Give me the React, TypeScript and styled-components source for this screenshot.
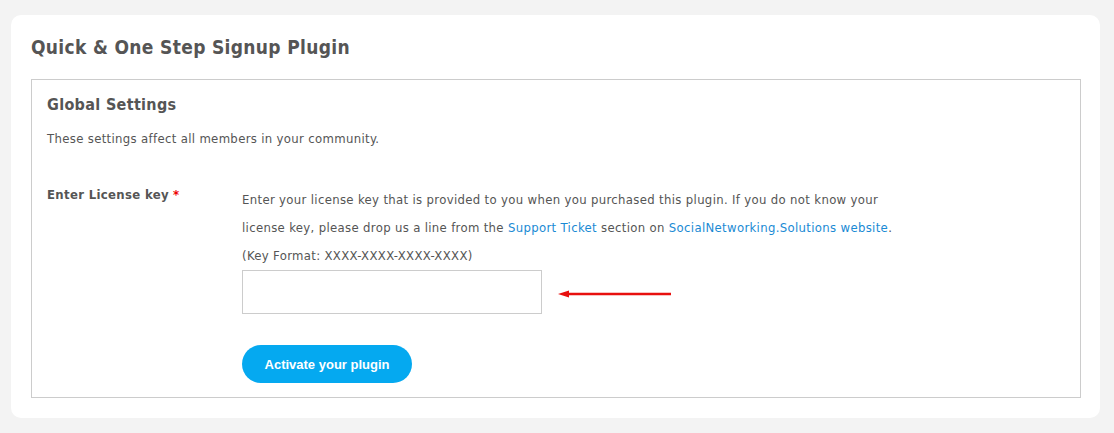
import React from 'react';
import styled, { createGlobalStyle } from 'styled-components';

const GlobalStyle = createGlobalStyle`
  body {
    margin: 0;
    background: #f3f3f3;
    font-family: Tahoma, "DejaVu Sans Condensed", "Noto Sans", sans-serif;
    letter-spacing: 0.33px;
    color: #555;
  }
`;

const Page = styled.div`
  padding: 15px 14px 14px 11px;
`;

const Card = styled.div`
  background: #fff;
  border-radius: 10px;
  padding: 20px 19px 20px 20px;
`;

const Title = styled.h2`
  margin: 0 0 20px;
  font-size: 19px;
  line-height: 24px;
  font-weight: bold;
  color: #555;
`;

const SettingsBox = styled.div`
  border: 1px solid #ccc;
  padding: 15px 15px 14px 15px;
`;

const BoxTitle = styled.h3`
  margin: 0 0 14px;
  font-size: 16px;
  line-height: 20px;
  font-weight: bold;
  color: #555;
`;

const Hint = styled.p`
  margin: 0 0 36px;
  font-size: 13px;
  line-height: 20px;
`;

const FormRow = styled.div`
  display: flex;
  align-items: flex-start;
`;

const Label = styled.label`
  width: 195px;
  flex-shrink: 0;
  font-size: 13px;
  line-height: 20px;
  font-weight: bold;
`;

const Required = styled.span`
  color: #e00;
  margin-left: 4px;
`;

const Field = styled.div`
  display: flex;
  flex-direction: column;
  align-items: flex-start;
  padding-top: 1px;
`;

const Description = styled.div`
  font-size: 13px;
  line-height: 28px;
`;

const Link = styled.a`
  color: #1a8ad4;
  text-decoration: none;
`;

const InputRow = styled.div`
  display: flex;
  align-items: center;
  gap: 15px;
  margin-bottom: 31px;
`;

const Input = styled.input`
  box-sizing: border-box;
  width: 300px;
  height: 44px;
  border: 1px solid #ccc;
  margin: 0;
  padding: 0 10px;
  font-size: 13px;
  outline: none;
`;

const ArrowMark = styled.svg`
  display: block;
  margin-top: 4px;
`;

const Button = styled.button`
  height: 38px;
  width: 170px;
  border: none;
  border-radius: 19px;
  background: #05a9f0;
  color: #fff;
  font-family: "Liberation Sans", Arial, sans-serif;
  letter-spacing: 0;
  font-size: 13px;
  font-weight: bold;
  cursor: pointer;
`;

const Arrow = () => (
  <ArrowMark width="116" height="10" viewBox="0 0 116 10">
    <line x1="8" y1="5" x2="114" y2="5" stroke="#e8100f" strokeWidth="2.4" />
    <polygon points="1,5 12,1.5 12,8.5" fill="#e8100f" />
  </ArrowMark>
);

export default function App() {
  return (
    <>
      <GlobalStyle />
      <Page>
        <Card>
          <Title>Quick &amp; One Step Signup Plugin</Title>
          <SettingsBox>
            <BoxTitle>Global Settings</BoxTitle>
            <Hint>These settings affect all members in your community.</Hint>
            <FormRow>
              <Label>
                Enter License key<Required>*</Required>
              </Label>
              <Field>
                <Description>
                  Enter your license key that is provided to you when you purchased this plugin. If you do not know your
                  <br />
                  license key, please drop us a line from the <Link href="#">Support Ticket</Link> section on{' '}
                  <Link href="#">SocialNetworking.Solutions website</Link>.
                  <br />
                  (Key Format: XXXX-XXXX-XXXX-XXXX)
                </Description>
                <InputRow>
                  <Input type="text" />
                  <Arrow />
                </InputRow>
                <Button>Activate your plugin</Button>
              </Field>
            </FormRow>
          </SettingsBox>
        </Card>
      </Page>
    </>
  );
}
